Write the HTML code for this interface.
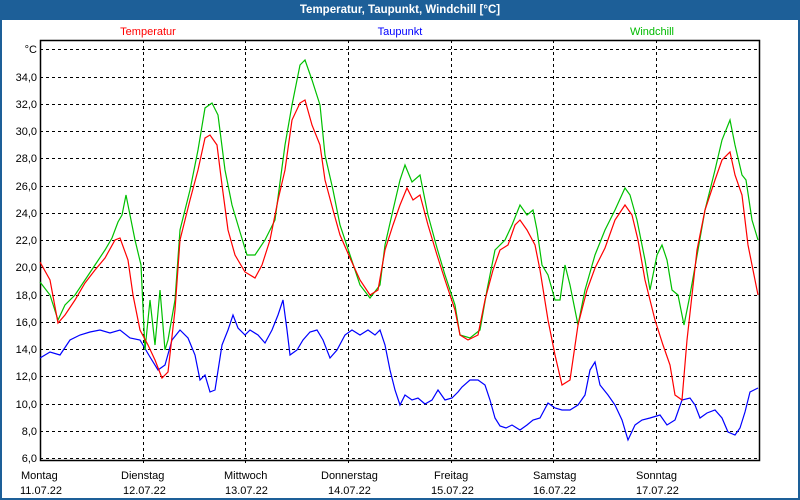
<!DOCTYPE html>
<html><head><meta charset="utf-8"><style>
html,body{margin:0;padding:0;background:#fff}
.w{position:relative;width:796px;height:498px;border:2px solid #1d5f98;border-top:0;background:#fff}
.t{height:20px;background:#1d5f98;color:#fff;font:bold 11.5px "Liberation Sans",sans-serif;text-align:center;line-height:20px}
svg{position:absolute;left:-2px;top:0}
text{font-family:"Liberation Sans",sans-serif;font-size:11px}
</style></head><body>
<div class="w"><div class="t">Temperatur, Taupunkt, Windchill [°C]</div>
<svg width="800" height="500">
<g stroke="#000" stroke-dasharray="3,3" stroke-width="1">
<line x1="40" y1="49.5" x2="760" y2="49.5"/><line x1="40" y1="77.5" x2="760" y2="77.5"/><line x1="40" y1="104.5" x2="760" y2="104.5"/><line x1="40" y1="131.5" x2="760" y2="131.5"/><line x1="40" y1="158.5" x2="760" y2="158.5"/><line x1="40" y1="186.5" x2="760" y2="186.5"/><line x1="40" y1="213.5" x2="760" y2="213.5"/><line x1="40" y1="240.5" x2="760" y2="240.5"/><line x1="40" y1="267.5" x2="760" y2="267.5"/><line x1="40" y1="295.5" x2="760" y2="295.5"/><line x1="40" y1="322.5" x2="760" y2="322.5"/><line x1="40" y1="349.5" x2="760" y2="349.5"/><line x1="40" y1="376.5" x2="760" y2="376.5"/><line x1="40" y1="404.5" x2="760" y2="404.5"/><line x1="40" y1="431.5" x2="760" y2="431.5"/><line x1="40" y1="458.5" x2="760" y2="458.5"/>
<line x1="143.5" y1="40" x2="143.5" y2="466"/><line x1="245.5" y1="40" x2="245.5" y2="466"/><line x1="348.5" y1="40" x2="348.5" y2="466"/><line x1="451.5" y1="40" x2="451.5" y2="466"/><line x1="553.5" y1="40" x2="553.5" y2="466"/><line x1="656.5" y1="40" x2="656.5" y2="466"/>
</g>
<rect x="40.5" y="40.5" width="719" height="420" fill="none" stroke="#000" stroke-width="1.5"/>
<g fill="#000" text-anchor="end">
<text x="37" y="53">°C</text><text x="37" y="81">34,0</text><text x="37" y="108">32,0</text><text x="37" y="135">30,0</text><text x="37" y="162">28,0</text><text x="37" y="190">26,0</text><text x="37" y="217">24,0</text><text x="37" y="244">22,0</text><text x="37" y="271">20,0</text><text x="37" y="299">18,0</text><text x="37" y="326">16,0</text><text x="37" y="353">14,0</text><text x="37" y="380">12,0</text><text x="37" y="408">10,0</text><text x="37" y="435">8,0</text><text x="37" y="462">6,0</text>
</g>
<g fill="#000">
<text x="21" y="479">Montag</text><text x="20" y="494">11.07.22</text>
<text x="121" y="479">Dienstag</text><text x="123" y="494">12.07.22</text>
<text x="224" y="479">Mittwoch</text><text x="225" y="494">13.07.22</text>
<text x="321" y="479">Donnerstag</text><text x="328" y="494">14.07.22</text>
<text x="434" y="479">Freitag</text><text x="431" y="494">15.07.22</text>
<text x="533" y="479">Samstag</text><text x="533" y="494">16.07.22</text>
<text x="636" y="479">Sonntag</text><text x="636" y="494">17.07.22</text>
</g>
<text x="148" y="35" fill="#ff0000" text-anchor="middle">Temperatur</text>
<text x="400" y="35" fill="#0000ff" text-anchor="middle">Taupunkt</text>
<text x="652" y="35" fill="#00bb00" text-anchor="middle">Windchill</text>
<g fill="none" stroke-width="1.2">
<polyline stroke="#0000ff" points="40,358 50,352 60,355 70,340 80,335 90,332 100,330 110,333 120,330 130,338 140,340 150,357 158,370 165,365 172,340 180,330 188,338 195,355 200,380 205,375 210,392 215,390 222,345 228,330 233,315 238,328 245,335 250,330 258,335 265,343 272,330 278,315 283,300 287,330 290,355 297,350 303,340 310,332 317,330 323,340 330,358 337,350 345,335 352,330 360,335 368,330 375,335 380,330 385,345 390,370 395,390 400,405 405,395 412,400 418,398 425,404 432,400 438,390 445,400 452,398 458,392 462,387 470,380 478,380 485,385 490,400 495,418 500,426 506,428 512,425 520,430 527,425 533,420 540,418 548,403 555,408 562,410 570,410 578,405 585,395 590,370 595,362 600,385 608,395 615,405 622,420 628,440 635,425 642,420 650,418 660,415 667,425 675,420 682,400 690,398 695,405 700,418 707,413 715,410 722,418 728,432 735,435 740,428 745,412 750,392 758,388"/>
<polyline stroke="#00c000" points="40,282 50,295 58,320 65,305 75,295 85,280 95,265 105,250 112,238 118,222 122,215 126,195 130,215 135,240 141,265 145,350 150,300 155,345 160,290 165,350 168,340 175,300 180,230 190,190 198,150 205,108 212,103 218,115 225,170 232,205 240,232 247,255 255,255 265,240 275,220 285,145 292,105 300,65 305,60 312,80 320,105 325,155 333,190 340,225 350,255 360,285 370,298 380,285 385,245 393,210 400,180 405,165 412,182 420,175 428,215 437,248 445,275 455,305 460,335 470,338 480,330 487,290 495,250 505,240 512,225 520,205 527,215 533,210 537,230 542,265 548,275 555,300 560,300 565,265 570,285 578,325 585,290 595,255 605,230 615,210 625,188 630,195 637,220 645,260 650,290 657,255 662,245 667,260 672,290 678,295 684,325 690,295 698,250 705,210 715,170 722,140 730,120 735,145 742,175 746,180 752,220 758,240"/>
<polyline stroke="#ff0000" points="40,262 50,280 58,323 65,315 75,300 85,283 95,270 105,258 115,240 120,238 128,260 133,295 140,330 148,345 155,360 162,378 168,372 175,310 180,240 190,200 198,170 205,138 210,135 217,145 222,185 228,230 235,255 245,272 255,278 262,265 270,240 278,200 285,170 292,120 300,103 305,100 312,125 320,145 325,180 333,210 340,235 350,258 360,280 370,295 378,290 385,250 393,225 400,205 407,188 413,200 420,195 428,225 437,255 445,280 455,310 460,335 468,340 478,335 485,300 493,270 500,250 508,245 515,225 520,220 527,230 535,245 540,270 548,320 555,355 562,385 570,380 578,325 587,290 595,268 605,248 615,220 625,205 632,215 638,240 645,280 655,320 663,345 670,365 675,395 682,400 687,340 697,250 705,210 715,180 722,160 730,152 735,175 742,195 748,245 758,295"/>
</g>
</svg></div>
</body></html>
